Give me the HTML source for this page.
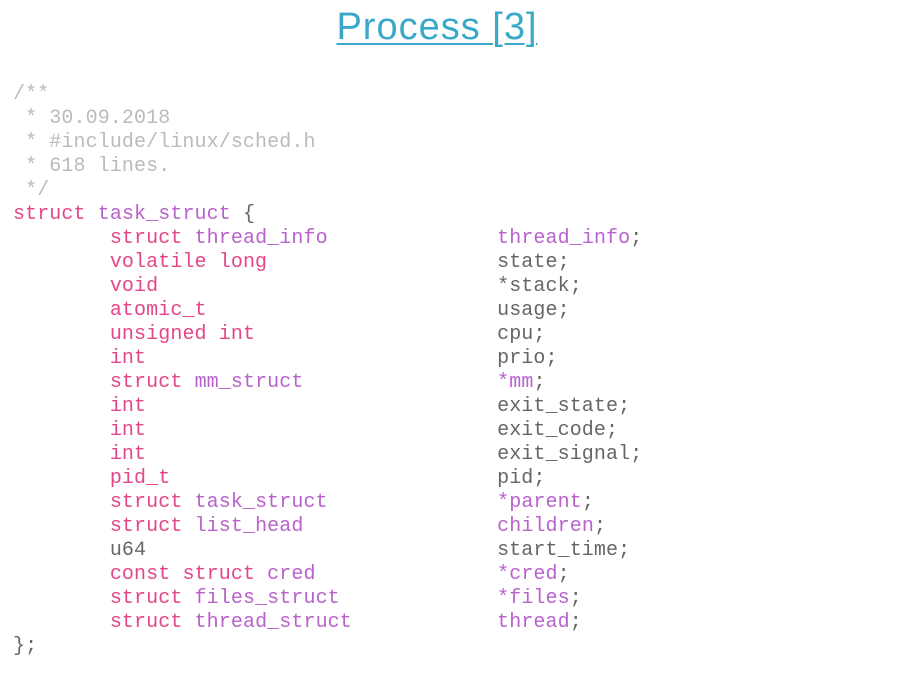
<!DOCTYPE html>
<html><head><meta charset="utf-8"><style>
html,body{margin:0;padding:0;background:#fff;width:908px;height:698px;overflow:hidden}
h1{position:absolute;left:0;width:874px;top:6px;margin:0;text-align:center;font:38px "Liberation Sans",sans-serif;color:#3aa8c8;text-decoration:underline;text-decoration-thickness:2px;text-underline-offset:4px;letter-spacing:1px}
pre{position:absolute;left:13px;top:83px;margin:0;font:20px/24px "Liberation Mono",monospace;color:#666;letter-spacing:0.1px}
.c{color:#bbb}.k{color:#e4468a}.t{color:#b962cc}
</style></head><body>
<h1>Process [3]</h1>
<pre><span class="c">/**
 * 30.09.2018
 * #include/linux/sched.h
 * 618 lines.
 */</span>
<span class="k">struct</span> <span class="t">task_struct</span> {
        <span class="k">struct</span> <span class="t">thread_info</span>              <span class="t">thread_info</span>;
        <span class="k">volatile long</span>                   state;
        <span class="k">void</span>                            *stack;
        <span class="k">atomic_t</span>                        usage;
        <span class="k">unsigned int</span>                    cpu;
        <span class="k">int</span>                             prio;
        <span class="k">struct</span> <span class="t">mm_struct</span>                <span class="t">*mm</span>;
        <span class="k">int</span>                             exit_state;
        <span class="k">int</span>                             exit_code;
        <span class="k">int</span>                             exit_signal;
        <span class="k">pid_t</span>                           pid;
        <span class="k">struct</span> <span class="t">task_struct</span>              <span class="t">*parent</span>;
        <span class="k">struct</span> <span class="t">list_head</span>                <span class="t">children</span>;
        u64                             start_time;
        <span class="k">const struct</span> <span class="t">cred</span>               <span class="t">*cred</span>;
        <span class="k">struct</span> <span class="t">files_struct</span>             <span class="t">*files</span>;
        <span class="k">struct</span> <span class="t">thread_struct</span>            <span class="t">thread</span>;
};</pre>
</body></html>
